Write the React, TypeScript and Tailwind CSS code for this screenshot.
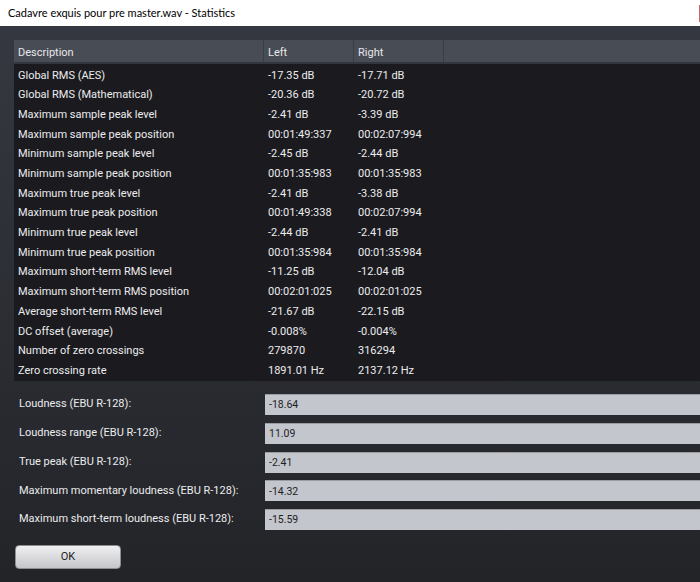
const rows: [string, string, string][] = [
  ["Global RMS (AES)", "-17.35 dB", "-17.71 dB"],
  ["Global RMS (Mathematical)", "-20.36 dB", "-20.72 dB"],
  ["Maximum sample peak level", "-2.41 dB", "-3.39 dB"],
  ["Maximum sample peak position", "00:01:49:337", "00:02:07:994"],
  ["Minimum sample peak level", "-2.45 dB", "-2.44 dB"],
  ["Minimum sample peak position", "00:01:35:983", "00:01:35:983"],
  ["Maximum true peak level", "-2.41 dB", "-3.38 dB"],
  ["Maximum true peak position", "00:01:49:338", "00:02:07:994"],
  ["Minimum true peak level", "-2.44 dB", "-2.41 dB"],
  ["Minimum true peak position", "00:01:35:984", "00:01:35:984"],
  ["Maximum short-term RMS level", "-11.25 dB", "-12.04 dB"],
  ["Maximum short-term RMS position", "00:02:01:025", "00:02:01:025"],
  ["Average short-term RMS level", "-21.67 dB", "-22.15 dB"],
  ["DC offset (average)", "-0.008%", "-0.004%"],
  ["Number of zero crossings", "279870", "316294"],
  ["Zero crossing rate", "1891.01 Hz", "2137.12 Hz"],
];

const loudness: [string, string][] = [
  ["Loudness (EBU R-128):", "-18.64"],
  ["Loudness range (EBU R-128):", "11.09"],
  ["True peak (EBU R-128):", "-2.41"],
  ["Maximum momentary loudness (EBU R-128):", "-14.32"],
  ["Maximum short-term loudness (EBU R-128):", "-15.59"],
];

export default function App() {
  return (
    <div className="w-[700px] h-[582px] overflow-hidden flex flex-col font-['Roboto',sans-serif]">
      {/* title bar */}
      <div className="h-[26px] bg-white flex items-center justify-between pl-2 shrink-0">
        <span className="text-[11px] text-black font-['Lato',sans-serif]">
          Cadavre exquis pour pre master.wav - Statistics
        </span>
        <div className="w-px h-[17px] bg-[#c86464]" />
      </div>

      <div className="flex-1 bg-gradient-to-b from-[#353840] to-[#222428] pt-[14px] pl-[14px] flex flex-col">
        {/* statistics table */}
        <div className="bg-[#1b1b1f]">
          <div className="h-[24px] flex bg-[#484c55] border-b-2 border-[#33363c] text-[11px] text-[#e8e8ea]">
            <div className="w-[250px] px-1 pt-[5px] border-r border-[#3a3d44]">Description</div>
            <div className="w-[90px] px-1 pt-[5px] border-r border-[#3a3d44]">Left</div>
            <div className="w-[90px] px-1 pt-[5px] border-r border-[#3a3d44]">Right</div>
            <div className="flex-1" />
          </div>
          <div className="pt-[2px]">
            {rows.map(([d, l, r]) => (
              <div key={d} className="h-[19.7px] flex items-center text-[11px] text-[#ececee]">
                <div className="w-[250px] px-1">{d}</div>
                <div className="w-[90px] px-1">{l}</div>
                <div className="w-[90px] px-1">{r}</div>
              </div>
            ))}
          </div>
        </div>

        {/* loudness fields */}
        <div className="mt-[13px] flex flex-col gap-[7.8px]">
          {loudness.map(([label, value]) => (
            <div key={label} className="flex items-center h-[21px]">
              <div className="w-[251px] pl-[5px] text-[11px] text-[#ececee]">{label}</div>
              <div className="flex-1 h-full bg-[#c3c6cd] border-t border-[#9a9ca2] flex items-center pl-[4px] text-[10.5px] text-[#1e1e22]">
                {value}
              </div>
            </div>
          ))}
        </div>

        <div className="mt-[13px] pl-[1px]">
          <button className="w-[106px] h-[24px] rounded-[4px] bg-gradient-to-b from-[#f0f0f2] to-[#c5c6ca] border border-[#8d8f94] text-[11px] text-[#222]">
            OK
          </button>
        </div>
      </div>
    </div>
  );
}
